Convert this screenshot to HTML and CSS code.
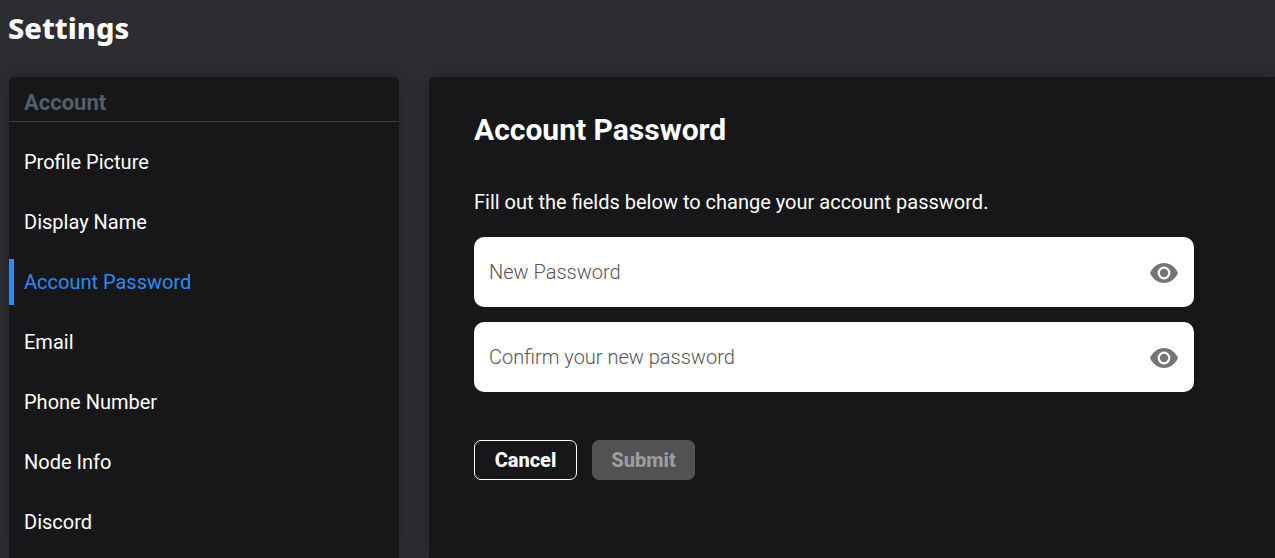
FILE: index.html
```html
<!DOCTYPE html>
<html lang="en">
<head>
  <meta charset="UTF-8">
  <meta name="viewport" content="width=device-width, initial-scale=1.0">
  <title>Settings</title>
  <link rel="stylesheet" href="styles.css">
</head>
<body>
  <header class="page-header">
    <h1>Settings</h1>
  </header>

  <div class="settings">
    <!-- Sidebar navigation -->
    <nav class="sidebar" aria-labelledby="account-heading">
      <h2 class="sidebar-title" id="account-heading">Account</h2>
      <ul class="menu">
        <li><a href="#picture">Profile Picture</a></li>
        <li><a href="#name">Display Name</a></li>
        <li><a class="active" href="#password" aria-current="page">Account Password</a></li>
        <li><a href="#email">Email</a></li>
        <li><a href="#phone">Phone Number</a></li>
        <li><a href="#node">Node Info</a></li>
        <li><a href="#discord">Discord</a></li>
      </ul>
    </nav>

    <!-- Selected settings page -->
    <main class="content">
      <h2>Account Password</h2>
      <p>Fill out the fields below to change your account password.</p>
      <form class="password-form">
        <div class="field">
          <input type="password" id="new-password" aria-label="New Password" placeholder="New Password">
          <button class="toggle" type="button" aria-label="Show new password">
            <svg viewBox="0 0 28 20" width="28" height="20">
              <path fill="currentColor" d="M14 0C8 0 2.600 4 0 10c2.600 6 8 10 14 10s11.400-4 14-10C25.400 4 20 0 14 0z"/>
              <circle cx="14" cy="10" r="5.300" fill="none" stroke="#fff" stroke-width="2.200"/>
            </svg>
          </button>
        </div>
        <div class="field">
          <input type="password" id="confirm-password" aria-label="Confirm your new password" placeholder="Confirm your new password">
          <button class="toggle" type="button" aria-label="Show confirmed password">
            <svg viewBox="0 0 28 20" width="28" height="20">
              <path fill="currentColor" d="M14 0C8 0 2.600 4 0 10c2.600 6 8 10 14 10s11.400-4 14-10C25.400 4 20 0 14 0z"/>
              <circle cx="14" cy="10" r="5.300" fill="none" stroke="#fff" stroke-width="2.200"/>
            </svg>
          </button>
        </div>
        <div class="actions">
          <button class="btn" type="reset">Cancel</button>
          <button class="btn btn-submit" type="submit" disabled>Submit</button>
        </div>
      </form>
    </main>
  </div>
</body>
</html>
```
FILE: styles.css
```css
* {
  box-sizing: border-box;
}

body {
  display: flex;
  flex-direction: column;
  min-height: 100vh;
  margin: 0;
  background: #2d2c31;
  color: #fff;
  font-family: Roboto, sans-serif;
  font-size: 20px;
  line-height: 24px;
}

h1,
h2,
p {
  margin: 0;
}

.page-header {
  padding: 8px 8px 29px;
}

.page-header h1 {
  font-family: "Noto Sans", sans-serif;
  font-size: 29px;
  font-weight: 800;
  line-height: 40px;
}

/* Two panels side by side */
.settings {
  display: flex;
  flex: 1;
  gap: 30px;
  padding-left: 9px;
}

.sidebar,
.content {
  background: #171719;
  border-radius: 5px 5px 0 0;
  box-shadow: 0 0 20px rgba(0, 0, 0, 0.2);
}

.sidebar {
  flex: 0 0 390px;
}

.sidebar-title {
  padding: 12px 15px 4px;
  border-bottom: 1px solid #3b3b42;
  color: #50606b;
  font-size: 22px;
  line-height: 28px;
}

.menu {
  display: flex;
  flex-direction: column;
  gap: 14px;
  margin: 0;
  padding: 17px 0 13px;
  list-style: none;
}

.menu a {
  display: block;
  padding: 11px 15px;
  color: #fff;
  text-decoration: none;
}

.menu .active {
  padding-left: 10px;
  border-left: 5px solid #2a8cf4;
  color: #2a8cf4;
}

.content {
  flex: 1;
  padding: 35px 45px;
  border-top-right-radius: 0;
}

.content h2 {
  margin-bottom: 42px;
  font-size: 30px;
  line-height: 36px;
}

.password-form {
  display: flex;
  flex-direction: column;
  gap: 15px;
  max-width: 720px;
  margin-top: 23px;
}

.field {
  display: flex;
  align-items: center;
  height: 70px;
  padding: 0 15px;
  background: #fff;
  border-radius: 10px;
}

.field input {
  flex: 1;
  min-width: 0;
  padding: 0;
  border: 0;
  outline: 0;
  background: none;
  color: #171719;
  font: 300 20px/24px Roboto, sans-serif;
}

.field input::placeholder {
  color: #555;
}

.toggle {
  display: flex;
  padding: 2px 1px 0;
  border: 0;
  background: none;
  color: #757575;
  cursor: pointer;
}

.actions {
  display: flex;
  gap: 15px;
  margin-top: 33px;
}

.btn {
  width: 103px;
  height: 40px;
  padding: 0;
  border: 1px solid #fff;
  border-radius: 7px;
  background: none;
  color: #fff;
  font: 800 20px/24px Roboto, sans-serif;
}

.btn-submit {
  border-color: #525252;
  background: #525252;
  color: #9c9c9c;
}
```
